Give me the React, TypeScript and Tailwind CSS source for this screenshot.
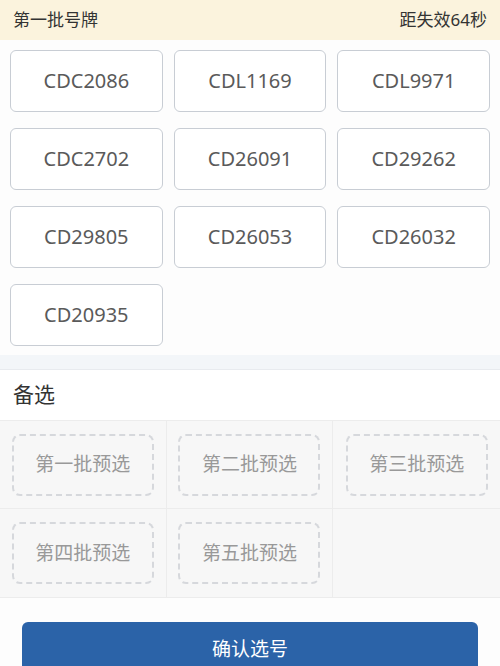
const plates = [
  'CDC2086', 'CDL1169', 'CDL9971',
  'CDC2702', 'CD26091', 'CD29262',
  'CD29805', 'CD26053', 'CD26032',
  'CD20935',
]

const alternates = ['第一批预选', '第二批预选', '第三批预选', '第四批预选', '第五批预选', '']

export default function App() {
  return (
    <div className="w-[500px] h-[666px] overflow-hidden bg-[#fdfdfd] font-['Noto_Sans','Noto_Sans_CJK_SC',sans-serif]">
      {/* top bar */}
      <div className="h-[40px] bg-[#fbf3dd] flex items-center justify-between px-[13px] text-[17px] text-[#333]">
        <span>第一批号牌</span>
        <span>距失效64秒</span>
      </div>

      {/* plate grid */}
      <div className="grid grid-cols-3 gap-x-[11px] gap-y-[16px] px-[10px] pt-[10px] pb-[9px]">
        {plates.map((p) => (
          <div
            key={p}
            className="h-[62px] rounded-[6px] border border-[#c8cdd4] bg-white flex items-center justify-center text-[20px] text-[#5a5a5a]"
          >
            {p}
          </div>
        ))}
      </div>

      <div className="h-[15px] bg-[#f3f6f9] border-b border-[#e8ebef]" />

      {/* alternates */}
      <div className="h-[50px] flex items-center px-[13px] text-[21px] text-[#333] bg-white">备选</div>
      <div className="grid grid-cols-3 bg-[#f7f7f7] border-t border-b border-[#ececec]">
        {alternates.map((a, i) => (
          <div
            key={i}
            className={`h-[88px] flex items-center justify-center border-[#ececec] ${i % 3 !== 2 ? 'border-r' : ''} ${i < 3 ? 'border-b' : ''}`}
          >
            {a && (
              <div className="w-[142px] h-[62px] rounded-[8px] border-2 border-dashed border-[#d6d8dc] flex items-center justify-center text-[19px] text-[#999]">
                {a}
              </div>
            )}
          </div>
        ))}
      </div>

      {/* confirm */}
      <div className="px-[22px] pt-[24px]">
        <div className="h-[54px] rounded-[6px] bg-[#2b63a8] flex items-center justify-center text-white text-[19px]">
          确认选号
        </div>
      </div>
    </div>
  )
}
